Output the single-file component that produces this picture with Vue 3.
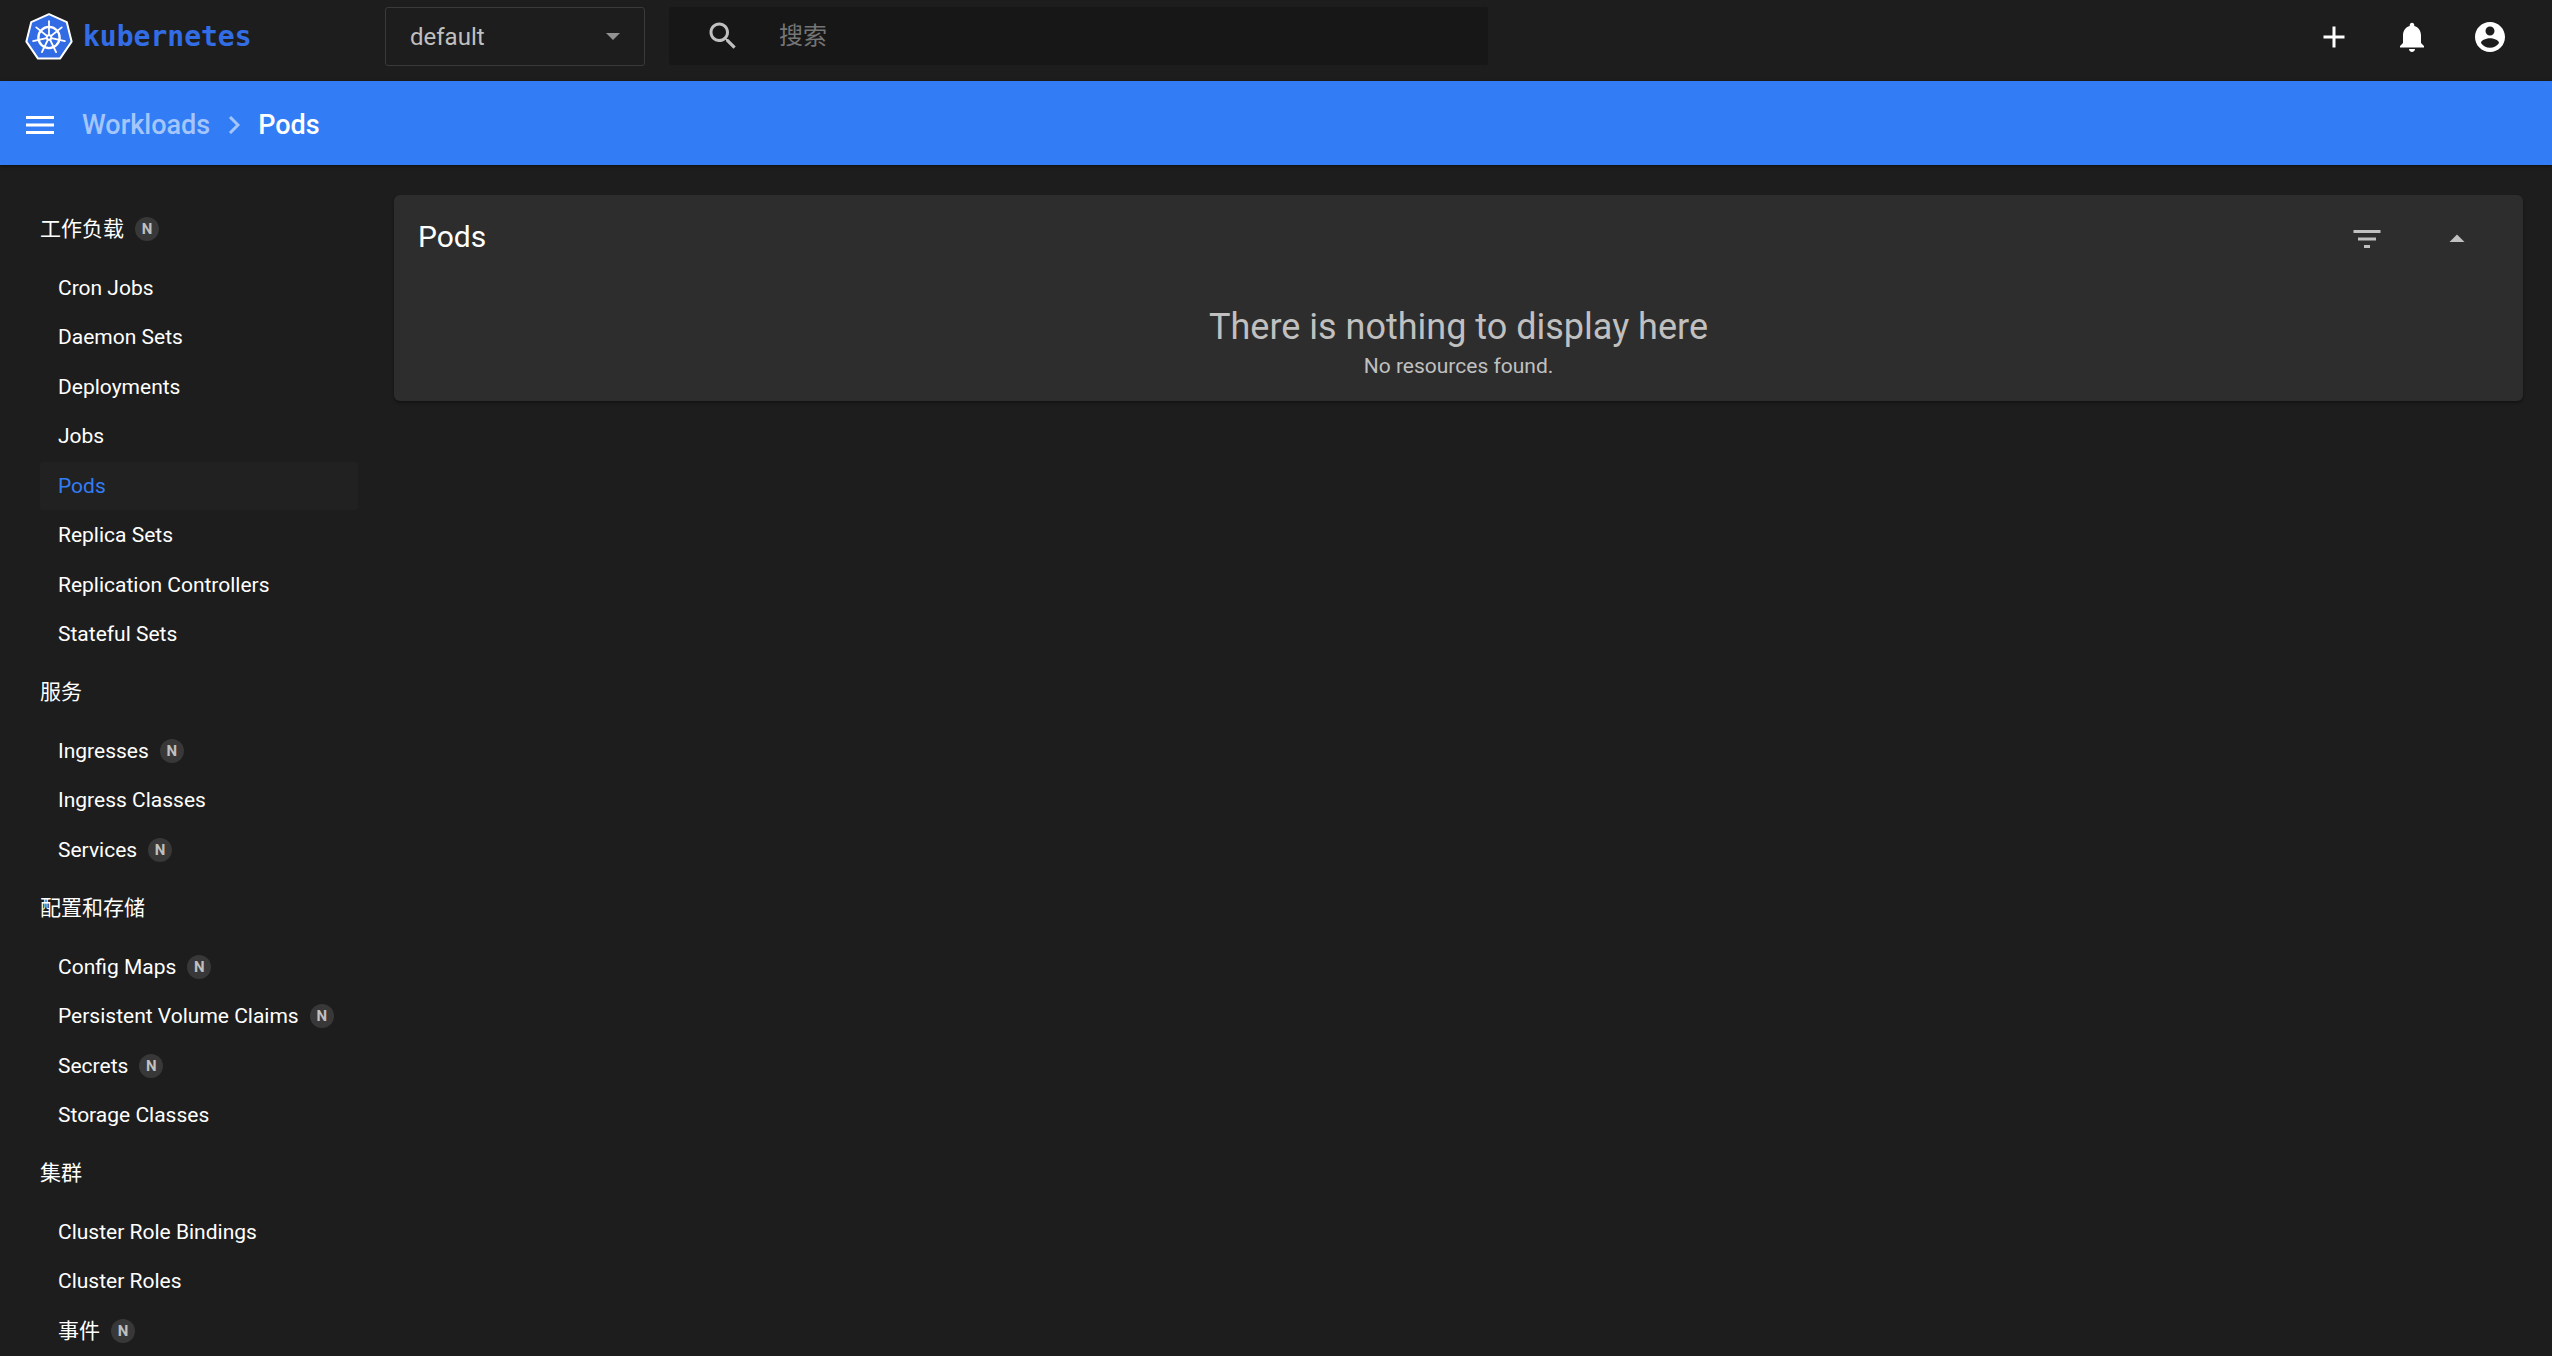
<script setup>
import { ref } from 'vue'

const namespace = ref('default')
const query = ref('')
const collapsed = ref(false)
const current = ref('Pods')

const groups = [
  {
    title: '工作负载',
    badge: true,
    items: [
      { name: 'Cron Jobs' },
      { name: 'Daemon Sets' },
      { name: 'Deployments' },
      { name: 'Jobs' },
      { name: 'Pods' },
      { name: 'Replica Sets' },
      { name: 'Replication Controllers' },
      { name: 'Stateful Sets' },
    ],
  },
  {
    title: '服务',
    items: [
      { name: 'Ingresses', badge: true },
      { name: 'Ingress Classes' },
      { name: 'Services', badge: true },
    ],
  },
  {
    title: '配置和存储',
    items: [
      { name: 'Config Maps', badge: true },
      { name: 'Persistent Volume Claims', badge: true },
      { name: 'Secrets', badge: true },
      { name: 'Storage Classes' },
    ],
  },
  {
    title: '集群',
    items: [
      { name: 'Cluster Role Bindings' },
      { name: 'Cluster Roles' },
      { name: '事件', badge: true },
    ],
  },
]

const spokes = [0, 1, 2, 3, 4, 5, 6].map((n) => (n * 360) / 7)
</script>

<template>
  <div class="app">
    <header class="topbar">
      <a class="logo" href="#" aria-label="kubernetes">
        <svg class="logo-mark" viewBox="0 0 48 48" aria-hidden="true">
          <path
            d="M24 1.2 L41.8 9.2 L46.6 28.6 L35 45.6 H13 L1.4 28.6 L6.2 9.2 Z"
            fill="#326ce5"
            stroke="#fff"
            stroke-width="2"
            stroke-linejoin="round"
          />
          <g stroke="#fff" fill="none">
            <circle cx="24" cy="24.5" r="10.6" stroke-width="2.4" />
            <g v-for="a in spokes" :key="a" :transform="`rotate(${a} 24 24.5)`">
              <path d="M24 22V8.2" stroke-width="1.8" stroke-linecap="round" />
            </g>
          </g>
          <circle cx="24" cy="24.5" r="3.2" fill="#fff" />
          <circle cx="24" cy="24.5" r="1.2" fill="#326ce5" />
        </svg>
        <span class="logo-text">kubernetes</span>
      </a>

      <div class="namespace">
        <select v-model="namespace" aria-label="Namespace">
          <option>default</option>
        </select>
        <svg class="caret" viewBox="0 0 14 7" aria-hidden="true"><path d="M0 0h14l-7 7z" /></svg>
      </div>

      <form class="search" role="search" @submit.prevent>
        <button class="search-btn" type="submit" aria-label="搜索">
          <svg class="icon" viewBox="0 0 24 24">
            <path
              d="M15.5 14h-.79l-.28-.27C15.41 12.59 16 11.11 16 9.5 16 5.91 13.09 3 9.5 3S3 5.91 3 9.5 5.91 16 9.5 16c1.61 0 3.09-.59 4.23-1.57l.27.28v.79l5 4.99L20.49 19l-4.99-5zm-6 0C7.01 14 5 11.99 5 9.5S7.01 5 9.5 5 14 7.01 14 9.5 11.99 14 9.5 14z"
            />
          </svg>
        </button>
        <input v-model="query" type="text" placeholder="搜索" aria-label="搜索" />
      </form>

      <div class="actions">
        <button type="button" aria-label="Create">
          <svg class="icon" viewBox="0 0 24 24"><path d="M19 13h-6v6h-2v-6H5v-2h6V5h2v6h6v2z" /></svg>
        </button>
        <button type="button" aria-label="Notifications">
          <svg class="icon" viewBox="0 0 24 24">
            <path
              d="M12 22c1.1 0 2-.9 2-2h-4c0 1.1.89 2 2 2zm6-6v-5c0-3.07-1.64-5.64-4.5-6.32V4c0-.83-.67-1.5-1.5-1.5s-1.5.67-1.5 1.5v.68C7.63 5.36 6 7.92 6 11v5l-2 2v1h16v-1l-2-2z"
            />
          </svg>
        </button>
        <button type="button" aria-label="Account">
          <svg class="icon" viewBox="0 0 24 24">
            <path
              d="M12 2C6.48 2 2 6.48 2 12s4.48 10 10 10 10-4.48 10-10S17.52 2 12 2zm0 3c1.66 0 3 1.34 3 3s-1.34 3-3 3-3-1.34-3-3 1.34-3 3-3zm0 14.2c-2.5 0-4.71-1.28-6-3.22.03-1.99 4-3.08 6-3.08 1.99 0 5.97 1.09 6 3.08-1.29 1.94-3.5 3.22-6 3.22z"
            />
          </svg>
        </button>
      </div>
    </header>

    <div class="crumbbar">
      <button class="menu" type="button" aria-label="Menu">
        <svg viewBox="0 0 28 18"><path d="M0 0h28v3H0zM0 7.5h28v3H0zM0 15h28v3H0z" /></svg>
      </button>
      <nav class="crumbs" aria-label="Breadcrumb">
        <a href="#">Workloads</a>
        <svg class="chevron" viewBox="0 0 12 18" aria-hidden="true">
          <path d="M2 1l8 8-8 8" />
        </svg>
        <span aria-current="page">Pods</span>
      </nav>
    </div>

    <div class="body">
      <nav class="sidebar">
        <section v-for="g in groups" :key="g.title">
          <h2>
            <a href="#">{{ g.title }}</a>
            <span v-if="g.badge" class="badge">N</span>
          </h2>
          <ul>
            <li v-for="item in g.items" :key="item.name">
              <a href="#" :class="{ active: item.name === current }" @click.prevent="current = item.name">
                {{ item.name }}
                <span v-if="item.badge" class="badge">N</span>
              </a>
            </li>
          </ul>
        </section>
      </nav>

      <main>
        <section class="card">
          <div class="card-head">
            <h1>Pods</h1>
            <button type="button" aria-label="Filter">
              <svg class="icon" viewBox="0 0 24 24"><path d="M10 18h4v-2h-4v2zM3 6v2h18V6H3zm3 7h12v-2H6v2z" /></svg>
            </button>
            <button type="button" aria-label="Collapse" @click="collapsed = !collapsed">
              <svg class="icon" viewBox="0 0 24 24"><path d="M7 14l5-5 5 5z" /></svg>
            </button>
          </div>
          <div v-if="!collapsed" class="empty">
            <p class="empty-title">There is nothing to display here</p>
            <p class="empty-text">No resources found.</p>
          </div>
        </section>
      </main>
    </div>
  </div>
</template>

<style>
body {
  margin: 0;
  background: #1d1d1d;
}
</style>

<style scoped>
.app {
  box-sizing: border-box;
  height: 100vh;
  display: flex;
  flex-direction: column;
  overflow: hidden;
  background: #1d1d1d;
  color: #fff;
  font-family: Roboto, 'Noto Sans CJK SC', sans-serif;
  font-size: 21px;
}
a {
  color: inherit;
  text-decoration: none;
}
button {
  padding: 0;
  border: 0;
  background: none;
  color: inherit;
  cursor: pointer;
}
h1,
h2,
p,
ul {
  margin: 0;
  padding: 0;
  list-style: none;
}
svg {
  display: block;
  fill: currentColor;
}
.icon {
  width: 36px;
  height: 36px;
}
.topbar {
  box-sizing: border-box;
  flex: none;
  display: flex;
  align-items: flex-start;
  height: 81px;
  padding: 7px 32px 0 25px;
}
.logo {
  display: flex;
  align-items: center;
  gap: 10px;
  width: 360px;
  height: 59px;
  color: #326de6;
}
.logo-mark {
  width: 48px;
  height: 48px;
}
.logo-text {
  font: bold 28px/36px 'DejaVu Sans Mono', monospace;
}
.namespace {
  position: relative;
  width: 260px;
}
.namespace select {
  box-sizing: border-box;
  width: 100%;
  height: 59px;
  padding: 0 24px;
  appearance: none;
  border: 1px solid #3a3a3a;
  border-radius: 3px;
  background: transparent;
  color: #c0c0c0;
  font: 24px/36px Roboto, sans-serif;
}
.caret {
  position: absolute;
  right: 25px;
  top: 26px;
  width: 14px;
  height: 7px;
  color: #929292;
  pointer-events: none;
}
.search {
  box-sizing: border-box;
  display: flex;
  align-items: center;
  flex: 0 1 819px;
  height: 58px;
  margin-left: 24px;
  padding-left: 36px;
  border-radius: 3px;
  background: #171717;
}
.search-btn {
  color: #c0c0c0;
}
.search input {
  flex: 1;
  min-width: 0;
  margin-left: 38px;
  padding: 0;
  border: 0;
  outline: 0;
  background: none;
  color: #fff;
  font: 24px/36px Roboto, 'Noto Sans CJK SC', sans-serif;
}
.search input::placeholder {
  color: #757575;
  opacity: 1;
}
.actions {
  display: flex;
  gap: 18px;
  margin-left: auto;
}
.actions button,
.card-head button {
  display: grid;
  place-items: center;
  width: 60px;
  height: 60px;
}
.crumbbar {
  box-sizing: border-box;
  flex: none;
  display: flex;
  align-items: center;
  gap: 28px;
  height: 84px;
  padding: 3px 26px 0;
  background: #327df5;
  box-shadow: 0 1px 3px rgba(0, 0, 0, 0.5);
}
.menu svg {
  width: 28px;
  height: 18px;
}
.crumbs {
  display: flex;
  align-items: center;
  gap: 18px;
  font-size: 27px;
  line-height: 36px;
  font-weight: 500;
}
.crumbs a,
.chevron {
  color: #a5c6fb;
}
.chevron {
  width: 12px;
  height: 18px;
  fill: none;
  stroke: currentColor;
  stroke-width: 3;
}
.body {
  flex: 1;
  min-height: 0;
  display: flex;
}
.sidebar {
  box-sizing: border-box;
  flex: none;
  width: 394px;
  padding: 30px 36px 0 40px;
  line-height: 24px;
}
.sidebar h2 {
  box-sizing: border-box;
  display: flex;
  align-items: center;
  height: 69px;
  padding-bottom: 1px;
  font-size: 21px;
  font-weight: 400;
}
.sidebar li {
  margin-bottom: 1px;
}
.sidebar li:nth-child(even) {
  margin-bottom: 2px;
}
.sidebar li:last-child {
  margin-bottom: 0;
}
.sidebar li a {
  display: flex;
  align-items: center;
  height: 48px;
  padding-left: 18px;
  border-radius: 3px;
}
.sidebar li a.active {
  background: #212121;
  color: #327df5;
}
.badge {
  width: 24px;
  height: 24px;
  margin-left: 11px;
  border-radius: 50%;
  background: #383838;
  color: #c0c0c0;
  font-size: 15px;
  font-weight: 700;
  line-height: 24px;
  text-align: center;
}
main {
  flex: 1;
  padding: 30px 29px 0 0;
}
.card {
  padding-bottom: 20px;
  border-radius: 6px;
  background: #2d2d2d;
  box-shadow: 0 2px 3px rgba(0, 0, 0, 0.35);
}
.card-head {
  display: flex;
  align-items: center;
  gap: 30px;
  height: 88px;
  padding: 0 36px 0 24px;
}
.card-head h1 {
  flex: 1;
  padding-bottom: 4px;
  font-size: 30px;
  line-height: 36px;
  font-weight: 400;
}
.card-head button {
  color: #c0c0c0;
}
.empty {
  padding-top: 20px;
  color: #c0c0c0;
  text-align: center;
}
.empty-title {
  font-size: 36px;
  line-height: 48px;
}
.empty-text {
  line-height: 30px;
}
</style>
